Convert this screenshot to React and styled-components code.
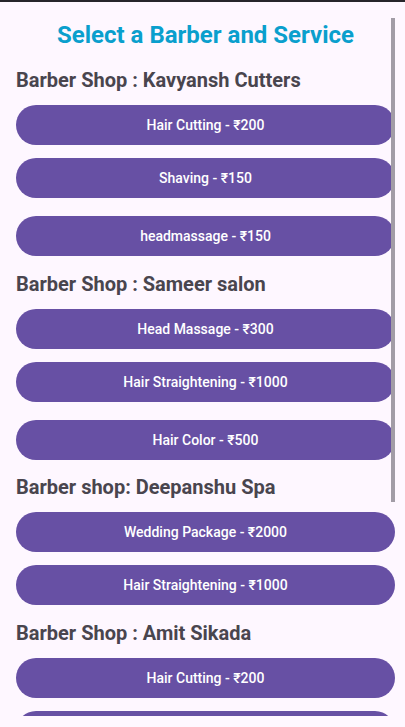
import React from "react";
import styled, { createGlobalStyle } from "styled-components";

const GlobalStyle = createGlobalStyle`
  html, body {
    margin: 0;
    padding: 0;
    background: #fef7ff;
  }
  body {
    font-family: Roboto, "Noto Sans", sans-serif;
    overflow: hidden;
  }
`;

const shops = [
  {
    name: "Barber Shop : Kavyansh Cutters",
    services: [
      { label: "Hair Cutting - ₹200" },
      { label: "Shaving - ₹150" },
      { label: "headmassage - ₹150", extra: true },
    ],
  },
  {
    name: "Barber Shop : Sameer salon",
    services: [
      { label: "Head Massage - ₹300" },
      { label: "Hair Straightening - ₹1000" },
      { label: "Hair Color - ₹500", extra: true },
    ],
  },
  {
    name: "Barber shop: Deepanshu Spa",
    tight: true,
    services: [
      { label: "Wedding Package - ₹2000" },
      { label: "Hair Straightening - ₹1000" },
    ],
  },
  {
    name: "Barber Shop : Amit Sikada",
    services: [
      { label: "Hair Cutting - ₹200" },
      { label: "Shaving - ₹150" },
    ],
  },
];

const App = () => {
  return (
    <Screen>
      <GlobalStyle />
      <StatusEdge />
      <Viewport>
        <Content>
          <Title>Select a Barber and Service</Title>
          {shops.map((shop) => (
            <Shop key={shop.name} $tight={shop.tight}>
              <ShopName>{shop.name}</ShopName>
              {shop.services.map((s, i) => (
                <ServiceButton key={i} $extra={s.extra}>
                  {s.label}
                </ServiceButton>
              ))}
            </Shop>
          ))}
        </Content>
        <ScrollThumb />
      </Viewport>
    </Screen>
  );
};

export default App;

const Screen = styled.div`
  width: 405px;
  height: 727px;
  overflow: hidden;
  background: #fef7ff;
  display: flex;
  flex-direction: column;
`;

const StatusEdge = styled.div`
  height: 2px;
  flex-shrink: 0;
  background: #27252b;
`;

const Viewport = styled.div`
  position: relative;
  height: 714px;
  flex-shrink: 0;
  overflow: hidden;
`;

const Content = styled.div`
  display: flex;
  flex-direction: column;
  padding: 0 10px 0 16px;
`;

const Title = styled.h1`
  margin: 17px 0 1px;
  font-size: 24px;
  line-height: 32px;
  font-weight: 700;
  color: #0a9fcd;
  text-align: center;
`;

const Shop = styled.section`
  display: flex;
  flex-direction: column;
  gap: 13px;
  margin-top: ${({ $tight }) => ($tight ? "14px" : "15px")};
`;

const ShopName = styled.h2`
  margin: 0 0 -1px;
  font-size: 20px;
  line-height: 26px;
  font-weight: 700;
  color: #49454e;
`;

const ServiceButton = styled.button`
  all: unset;
  box-sizing: border-box;
  height: 40px;
  flex-shrink: 0;
  border-radius: 20px;
  background: #6750a4;
  color: #ffffff;
  font-family: Roboto, "Noto Sans", sans-serif;
  font-size: 14px;
  font-weight: 500;
  display: flex;
  align-items: center;
  justify-content: center;
  margin-top: ${({ $extra }) => ($extra ? "5px" : "0")};
  cursor: pointer;
`;

const ScrollThumb = styled.div`
  position: absolute;
  top: 16px;
  left: 391px;
  width: 4px;
  height: 484px;
  background: #a29ca6;
`;
